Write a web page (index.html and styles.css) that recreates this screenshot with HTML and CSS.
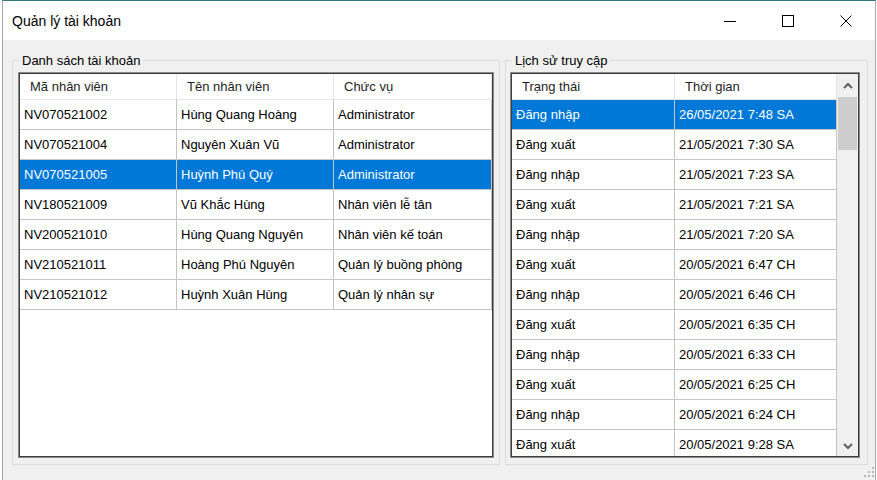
FILE: index.html
```html
<!DOCTYPE html>
<html lang="vi">
<head>
<meta charset="utf-8">
<title>Quản lý tài khoản</title>
<link rel="stylesheet" href="styles.css">
</head>
<body>
<div class="window">
  <div class="titlebar">
    <div class="title">Quản lý tài khoản</div>
    <div class="caption">
      <div class="cbtn"><svg width="12" height="12" viewBox="0 0 12 12"><line x1="0" y1="6.5" x2="12" y2="6.5" stroke="#000" stroke-width="1"/></svg></div>
      <div class="cbtn"><svg width="12" height="12" viewBox="0 0 12 12"><rect x="0.5" y="0.5" width="11" height="11" fill="none" stroke="#000" stroke-width="1"/></svg></div>
      <div class="cbtn"><svg width="12" height="12" viewBox="0 0 12 12"><path d="M0.5 0.5 L11.5 11.5 M11.5 0.5 L0.5 11.5" stroke="#000" stroke-width="1" fill="none"/></svg></div>
    </div>
  </div>
  <div class="client">
    <div class="group group-left">
      <span class="group-label">Danh sách tài khoản</span>
      <div class="lv">
        <div class="lv-inner">
          <div class="lv-head cols-left">
            <div class="hc">Mã nhân viên</div>
            <div class="hc">Tên nhân viên</div>
            <div class="hc">Chức vụ</div>
          </div>
          <div class="lv-row cols-left"><div class="c">NV070521002</div><div class="c">Hùng Quang Hoàng</div><div class="c">Administrator</div></div>
          <div class="lv-row cols-left"><div class="c">NV070521004</div><div class="c">Nguyên Xuân Vũ</div><div class="c">Administrator</div></div>
          <div class="lv-row cols-left sel"><div class="c">NV070521005</div><div class="c">Huỳnh Phú Quý</div><div class="c">Administrator</div></div>
          <div class="lv-row cols-left"><div class="c">NV180521009</div><div class="c">Vũ Khắc Hùng</div><div class="c">Nhân viên lễ tân</div></div>
          <div class="lv-row cols-left"><div class="c">NV200521010</div><div class="c">Hùng Quang Nguyên</div><div class="c">Nhân viên kế toán</div></div>
          <div class="lv-row cols-left"><div class="c">NV210521011</div><div class="c">Hoàng Phú Nguyên</div><div class="c">Quản lý buồng phòng</div></div>
          <div class="lv-row cols-left"><div class="c">NV210521012</div><div class="c">Huỳnh Xuân Hùng</div><div class="c">Quản lý nhân sự</div></div>
        </div>
      </div>
    </div>
    <div class="group group-right">
      <span class="group-label">Lịch sử truy cập</span>
      <div class="lv">
        <div class="lv-inner lv-split">
          <div class="lv-list">
            <div class="lv-head cols-right">
              <div class="hc">Trạng thái</div>
              <div class="hc">Thời gian</div>
            </div>
            <div class="lv-row cols-right sel"><div class="c">Đăng nhập</div><div class="c">26/05/2021 7:48 SA</div></div>
            <div class="lv-row cols-right"><div class="c">Đăng xuất</div><div class="c">21/05/2021 7:30 SA</div></div>
            <div class="lv-row cols-right"><div class="c">Đăng nhập</div><div class="c">21/05/2021 7:23 SA</div></div>
            <div class="lv-row cols-right"><div class="c">Đăng xuất</div><div class="c">21/05/2021 7:21 SA</div></div>
            <div class="lv-row cols-right"><div class="c">Đăng nhập</div><div class="c">21/05/2021 7:20 SA</div></div>
            <div class="lv-row cols-right"><div class="c">Đăng xuất</div><div class="c">20/05/2021 6:47 CH</div></div>
            <div class="lv-row cols-right"><div class="c">Đăng nhập</div><div class="c">20/05/2021 6:46 CH</div></div>
            <div class="lv-row cols-right"><div class="c">Đăng xuất</div><div class="c">20/05/2021 6:35 CH</div></div>
            <div class="lv-row cols-right"><div class="c">Đăng nhập</div><div class="c">20/05/2021 6:33 CH</div></div>
            <div class="lv-row cols-right"><div class="c">Đăng xuất</div><div class="c">20/05/2021 6:25 CH</div></div>
            <div class="lv-row cols-right"><div class="c">Đăng nhập</div><div class="c">20/05/2021 6:24 CH</div></div>
            <div class="lv-row cols-right"><div class="c">Đăng xuất</div><div class="c">20/05/2021 9:28 SA</div></div>
          </div>
          <div class="scrollbar">
            <div class="sb-btn sb-up"><svg width="10" height="7" viewBox="0 0 10 7"><polyline points="1,6 5,2 9,6" fill="none" stroke="#606060" stroke-width="2"/></svg></div>
            <div class="sb-track"><div class="sb-thumb"></div></div>
            <div class="sb-btn sb-down"><svg width="10" height="7" viewBox="0 0 10 7"><polyline points="1,1 5,5 9,1" fill="none" stroke="#606060" stroke-width="2"/></svg></div>
          </div>
        </div>
      </div>
    </div>
    <svg class="grip" width="12" height="12" viewBox="0 0 12 12">
      <rect x="9" y="1" width="2" height="2" fill="#b8b8b8"/>
      <rect x="5" y="5" width="2" height="2" fill="#b8b8b8"/>
      <rect x="9" y="5" width="2" height="2" fill="#b8b8b8"/>
      <rect x="1" y="9" width="2" height="2" fill="#b8b8b8"/>
      <rect x="5" y="9" width="2" height="2" fill="#b8b8b8"/>
      <rect x="9" y="9" width="2" height="2" fill="#b8b8b8"/>
    </svg>
  </div>
</div>
</body>
</html>
```

FILE: styles.css
```css
html, body {
  margin: 0;
  padding: 0;
  background: #ffffff;
}
body {
  width: 877px;
  height: 480px;
  overflow: hidden;
  font-family: "Liberation Sans", Arial, sans-serif;
  font-size: 13px;
  color: #000;
}
.window {
  margin-left: 2px;
  width: 874px;
  height: 480px;
  box-sizing: border-box;
  border-top: 1px solid #2f7a78;
  border-left: 1px solid #a8a8a8;
  border-right: 1px solid #a8a8a8;
  background: #f0f0f0;
  display: flex;
  flex-direction: column;
}
.titlebar {
  height: 39px;
  flex: none;
  background: #fff;
  display: flex;
  align-items: center;
}
.title {
  flex: 1;
  padding-left: 9px;
  font-size: 14px;
  color: #000;
}
.caption {
  display: flex;
  align-self: stretch;
}
.cbtn {
  width: 58px;
  display: flex;
  align-items: center;
  justify-content: center;
}
.cbtn svg { display: block; }
.client {
  flex: 1;
  position: relative;
  display: flex;
  align-items: flex-start;
  gap: 5px;
  padding: 20px 0 0 9px;
}
.group {
  position: relative;
  height: 405px;
  box-sizing: border-box;
  border: 1px solid #dcdcdc;
}
.group-left {
  width: 488px;
  padding: 11px 5px 6px 5px;
}
.group-right {
  width: 363px;
  padding: 11px 7px 6px 4px;
}
.group-label {
  position: absolute;
  top: -8px;
  left: 7px;
  padding: 0 2px;
  line-height: 15px;
  background: #f0f0f0;
  color: #000;
}
.lv {
  height: 386px;
  box-sizing: border-box;
  border: 1px solid #8c8c8c;
  background: #fff;
}
.lv-inner {
  height: 100%;
  box-sizing: border-box;
  border: 1px solid #3c3c3c;
  overflow: hidden;
}
.lv-split {
  display: flex;
}
.lv-list {
  width: 325px;
  overflow: hidden;
}
.cols-left {
  display: grid;
  grid-template-columns: 157px 157px 158px;
}
.cols-right {
  display: grid;
  grid-template-columns: 163px 162px;
}
.lv-head {
  height: 26px;
  box-sizing: border-box;
  border-bottom: 1px solid #e5e5e5;
}
.hc {
  display: flex;
  align-items: center;
  padding-left: 10px;
  border-right: 1px solid #e5e5e5;
  color: #1e1e1e;
  white-space: nowrap;
}
.lv-row {
  height: 30px;
  box-sizing: border-box;
  border-bottom: 1px solid #c4c4c4;
}
.c {
  display: flex;
  align-items: center;
  padding-left: 4px;
  border-right: 1px solid #c4c4c4;
  white-space: nowrap;
  overflow: hidden;
}
.lv-row.sel {
  background: #0078d7;
  color: #fff;
}
.scrollbar {
  width: 21px;
  background: #f0f0f0;
  display: flex;
  flex-direction: column;
}
.sb-btn {
  display: flex;
  align-items: center;
  justify-content: center;
}
.sb-up { height: 23px; }
.sb-down { height: 20px; }
.sb-btn svg { display: block; }
.sb-track {
  flex: 1;
}
.sb-thumb {
  margin: 0 1px;
  height: 53px;
  background: #cdcdcd;
}
.grip {
  position: absolute;
  right: 0;
  bottom: 2px;
}
```
